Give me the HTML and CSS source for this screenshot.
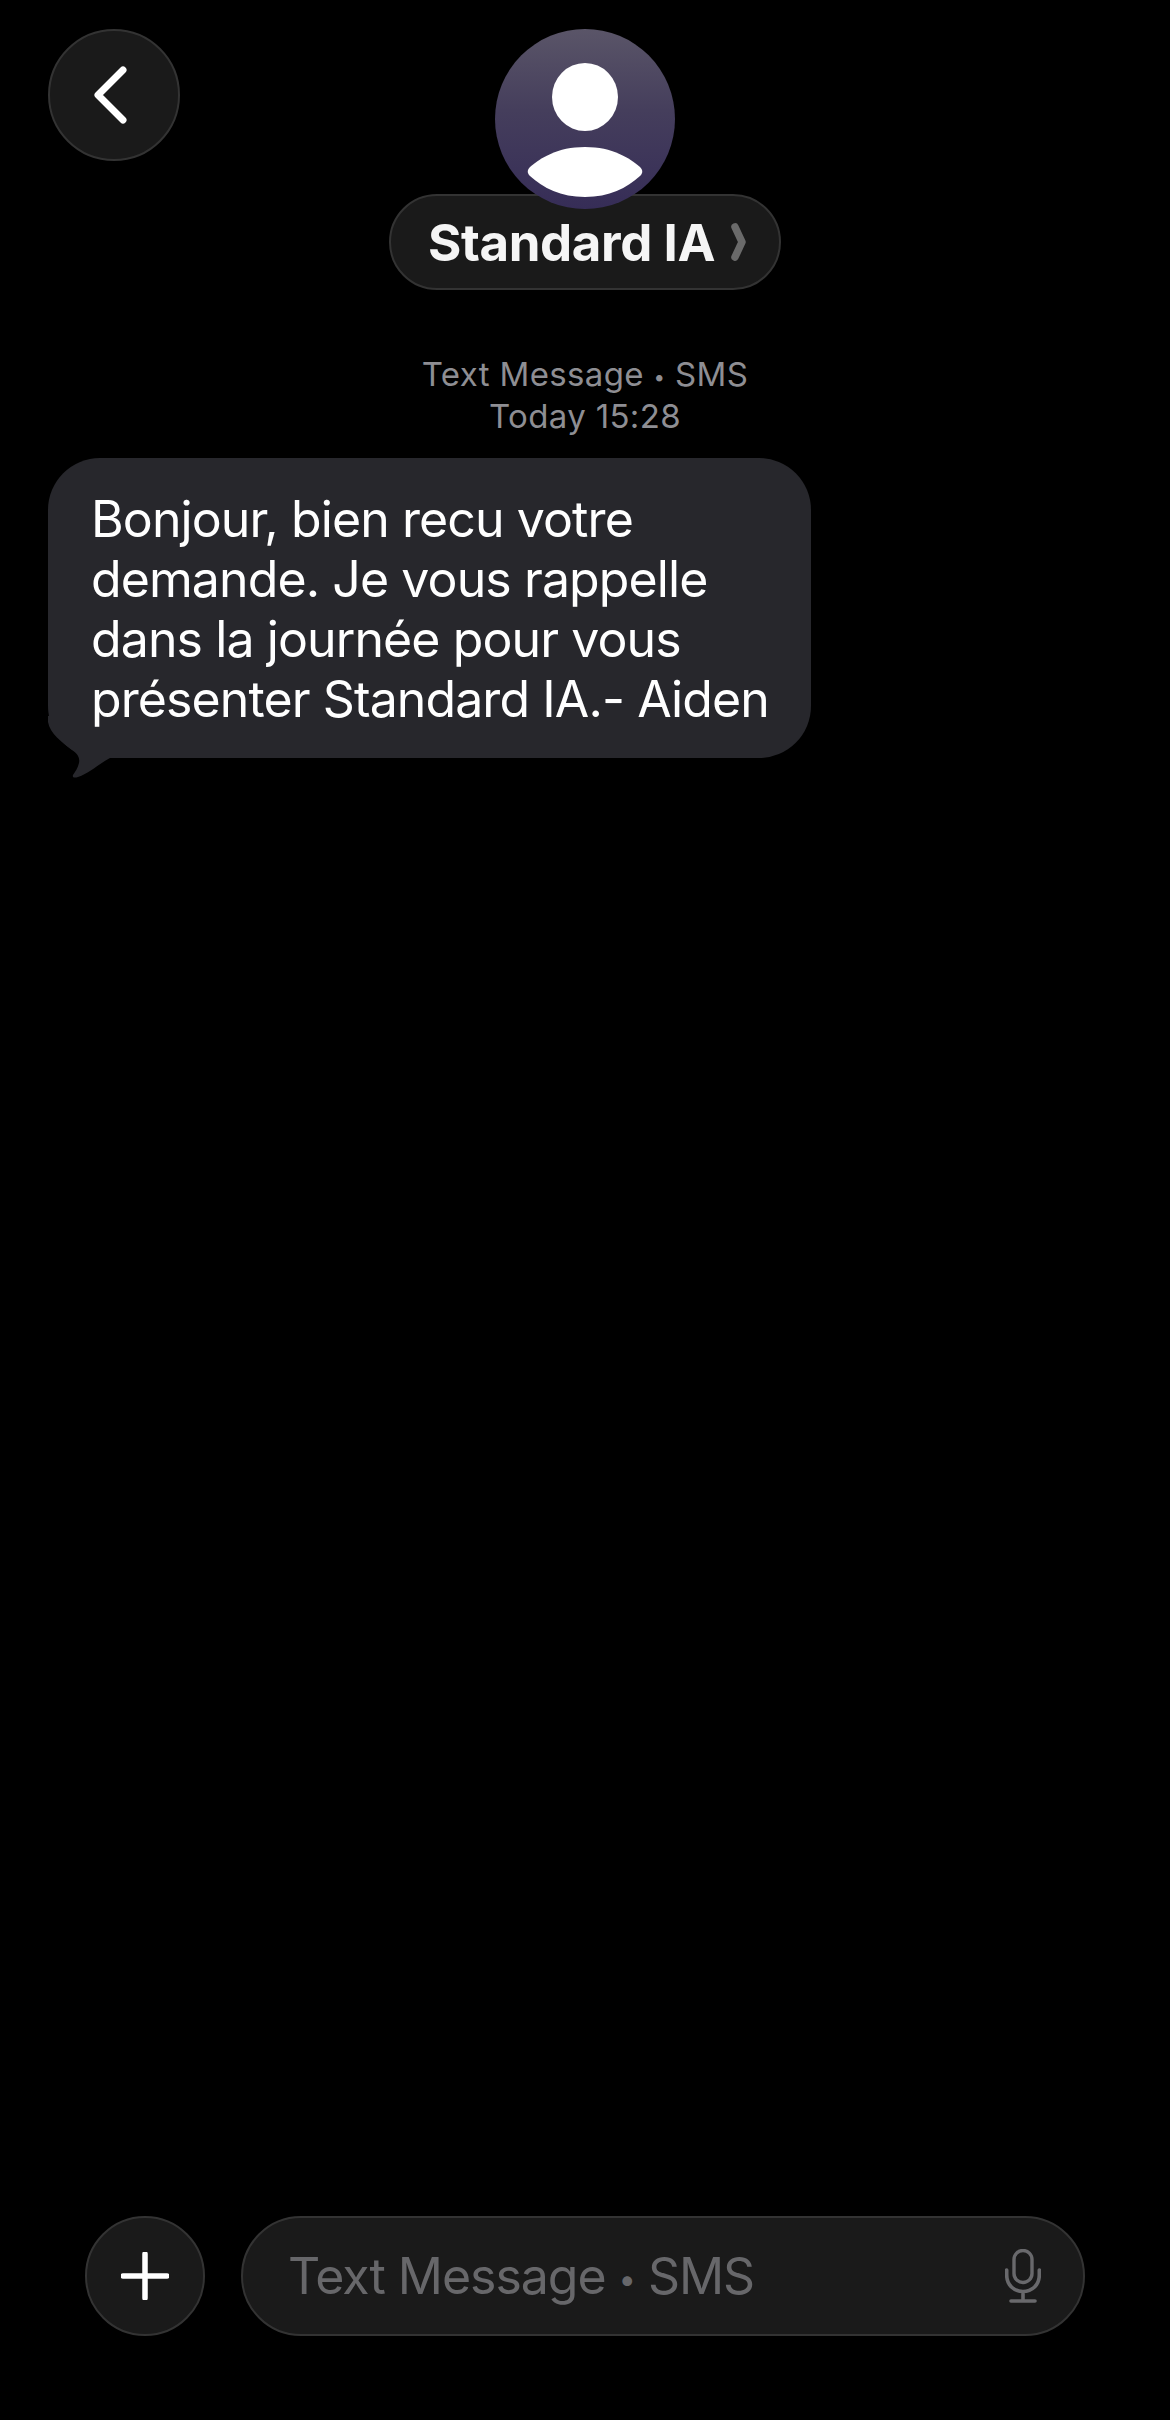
FILE: index.html
```html
<!DOCTYPE html>
<html lang="fr">
<head>
<meta charset="utf-8">
<title>Standard IA</title>
<link rel="stylesheet" href="styles.css">
</head>
<body>
<div class="screen">
  <header class="header">
    <button class="round back" aria-label="Back">
      <svg class="back-icon" viewBox="0 0 36 60" width="36" height="60"><path d="M31 5 L6 30 L31 55" fill="none" stroke="#fff" stroke-width="7" stroke-linecap="round" stroke-linejoin="round"/></svg>
    </button>
    <div class="contact">
      <svg class="avatar" viewBox="0 0 180 180" width="180" height="180">
        <defs><linearGradient id="avg" x1="0" y1="0" x2="0" y2="1"><stop offset="0" stop-color="#5a5568"/><stop offset=".45" stop-color="#453e5c"/><stop offset="1" stop-color="#362d57"/></linearGradient></defs>
        <circle cx="90" cy="90" r="90" fill="url(#avg)"/>
        <ellipse cx="90" cy="68" rx="33" ry="34" fill="#fff"/>
        <path d="M90 118 C62 118 46 129 35 138 C32 141 32 144 35 147 C48 159 66 168 90 168 C114 168 132 159 145 147 C148 144 148 141 145 138 C134 129 118 118 90 118 Z" fill="#fff"/>
      </svg>
      <div class="pill">
        <span class="name">Standard IA</span>
        <svg class="chev" viewBox="0 0 15 38" width="15" height="38"><path d="M4 4 L11 19 L4 34" fill="none" stroke="#6a6a6a" stroke-width="7.5" stroke-linecap="round" stroke-linejoin="round"/></svg>
      </div>
    </div>
  </header>

  <div class="meta">
    <div>Text Message <span class="dot">•</span> SMS</div>
    <div>Today 15:28</div>
  </div>

  <div class="thread">
    <div class="bubble">
      <svg class="tail" viewBox="0 0 80 62" width="80" height="62"><path d="M0 0 L0 6 C2 18 14 26 24 34 C30 38 32 42 31 47 C30 52 27 56 25 59 C24 62 27 62 30 61 C42 57 52 47 62 42 L80 42 L80 0 Z" fill="#27272c"/></svg>
      <p class="bubble-text">Bonjour, bien recu votre<br>demande. Je vous rappelle<br>dans la journée pour vous<br>présenter Standard IA.- Aiden</p>
    </div>
  </div>

  <footer class="composer">
    <button class="round plus" aria-label="Add">
      <svg viewBox="0 0 48 48" width="48" height="48"><path d="M24 2 V46 M2 24 H46" fill="none" stroke="#fff" stroke-width="5.5" stroke-linecap="round"/></svg>
    </button>
    <div class="field">
      <span class="placeholder">Text Message <span class="dot">•</span> SMS</span>
      <svg class="mic" viewBox="0 0 36 54" width="36" height="54">
        <rect x="9" y="1.5" width="18" height="32" rx="9" fill="none" stroke="#69696c" stroke-width="3.4"/>
        <path d="M1.7 21 V26 C1.7 36 9 42.5 18 42.5 C27 42.5 34.3 36 34.3 26 V21 M18 42.5 V52 M6 52 H30" fill="none" stroke="#69696c" stroke-width="3.6" stroke-linecap="round"/>
      </svg>
    </div>
  </footer>
</div>
</body>
</html>
```
FILE: styles.css
```css
* { box-sizing: border-box; }
html, body { margin: 0; padding: 0; background: #000; }
.screen {
  width: 1170px;
  height: 2420px;
  background: #000;
  color: #fff;
  font-family: Inter, "Liberation Sans", sans-serif;
  display: flex;
  flex-direction: column;
  overflow: hidden;
}
.round {
  display: flex;
  align-items: center;
  justify-content: center;
  padding: 0;
  border-radius: 50%;
  background: #1a1a1a;
  border: 2px solid #333;
}
.header {
  display: grid;
  grid-template-columns: 1fr auto 1fr;
  padding: 29px 0 0;
}
.back {
  width: 132px;
  height: 132px;
  margin-left: 48px;
  justify-self: start;
}
.back-icon { margin-right: 8px; }
.contact {
  display: flex;
  flex-direction: column;
  align-items: center;
}
.avatar { position: relative; z-index: 1; display: block; }
.pill {
  margin-top: -15px;
  height: 96px;
  width: 392px;
  border-radius: 48px;
  background: #1a1a1a;
  border: 2px solid #333;
  display: flex;
  align-items: center;
  padding-left: 37px;
  gap: 16px;
}
.name {
  font-size: 51px;
  font-weight: 700;
  letter-spacing: -0.4px;
  color: #f5f5f5;
  white-space: nowrap;
}
.chev { flex: none; }
.dot { font-size: 0.62em; line-height: 0; vertical-align: 0.12em; }
.meta {
  margin-top: 63px;
  text-align: center;
  color: #8e8e93;
  font-size: 33px;
  line-height: 42px;
  letter-spacing: 0.35px;
}
.thread {
  flex: 1;
  margin-top: 21px;
  padding-left: 48px;
}
.bubble {
  position: relative;
  width: 763px;
  height: 300px;
  background: #27272c;
  border-radius: 52px;
  padding: 31px 20px 0 43px;
}
.bubble-text {
  position: relative;
  margin: 0;
  font-size: 50px;
  line-height: 60px;
  letter-spacing: -0.9px;
  white-space: nowrap;
}
.tail {
  position: absolute;
  left: 0;
  top: 258px;
}
.composer {
  display: flex;
  align-items: center;
  gap: 36px;
  padding: 0 85px 84px;
}
.plus { width: 120px; height: 120px; flex: none; }
.field {
  flex: 1;
  height: 120px;
  border-radius: 60px;
  background: #1a1a1a;
  border: 2px solid #333;
  display: flex;
  align-items: center;
  justify-content: space-between;
  padding: 0 42px 0 45px;
}
.placeholder {
  font-size: 50px;
  letter-spacing: -1.05px;
  color: #67676a;
  white-space: nowrap;
}
.mic { flex: none; }
```
